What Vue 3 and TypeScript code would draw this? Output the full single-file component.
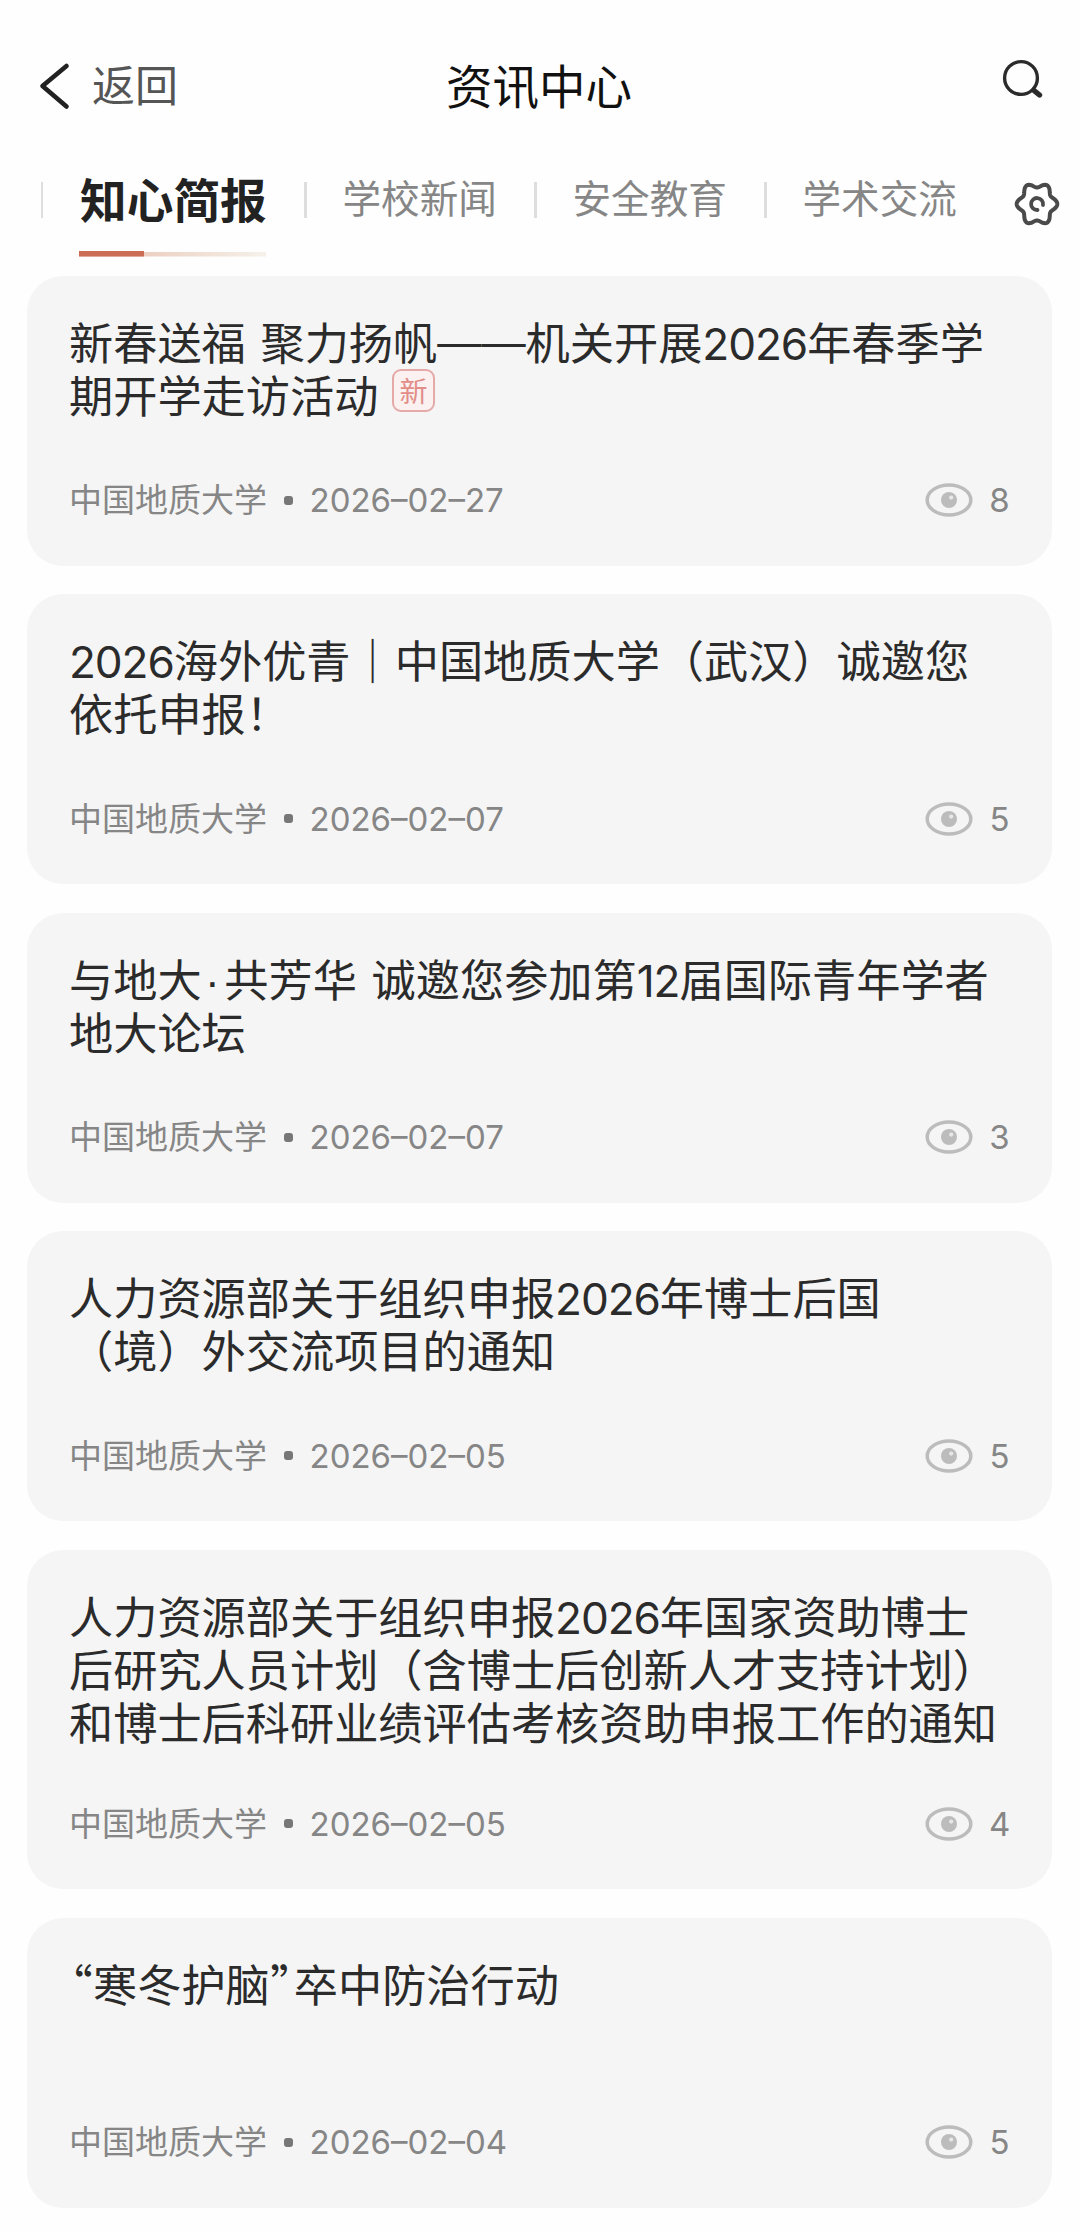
<script setup lang="ts">
interface Article {
  lines: string[]
  date: string
  views: number
  isNew?: boolean
}

interface Segment {
  text: string
  kind: string
}

const tabs: string[] = ['知心简报', '学校新闻', '安全教育', '学术交流']
const source = '中国地质大学'

const articles: Article[] = [
  { lines: ['新春送福 聚力扬帆——机关开展2026年春季学', '期开学走访活动'], date: '2026–02–27', views: 8, isNew: true },
  { lines: ['2026海外优青｜中国地质大学（武汉）诚邀您', '依托申报！'], date: '2026–02–07', views: 5 },
  { lines: ['与地大·共芳华 诚邀您参加第12届国际青年学者', '地大论坛'], date: '2026–02–07', views: 3 },
  { lines: ['人力资源部关于组织申报2026年博士后国', '（境）外交流项目的通知'], date: '2026–02–05', views: 5 },
  {
    lines: ['人力资源部关于组织申报2026年国家资助博士', '后研究人员计划（含博士后创新人才支持计划）', '和博士后科研业绩评估考核资助申报工作的通知'],
    date: '2026–02–05',
    views: 4,
  },
  { lines: ['“寒冬护脑”卒中防治行动'], date: '2026–02–04', views: 5 },
]

function kindOf(t: string): string {
  if (/^[0-9]/.test(t)) return 'num'
  if (t === ' ') return 'gap'
  if (t === '·') return 'mid'
  if (t === '“' || t === '”') return 'quote'
  if (t.startsWith('—')) return 'dash'
  return 'han'
}

// Splits a title line so that digits and punctuation get their own spacing.
function segments(line: string): Segment[] {
  return line
    .split(/([0-9]+|[“”· ]|—+)/)
    .filter((t) => t.length > 0)
    .map((t) => ({ text: t, kind: kindOf(t) }))
}

// Six-lobed outline of the settings icon.
function gearPath(): string {
  const pts: string[] = []
  for (let i = 0; i < 120; i++) {
    const a = (i / 120) * Math.PI * 2
    const r = 17.9 + 2.4 * Math.cos(6 * a)
    pts.push(`${(24 + r * Math.cos(a)).toFixed(2)} ${(24 + r * 1.06 * Math.sin(a)).toFixed(2)}`)
  }
  return `M${pts.join('L')}Z`
}
const gear = gearPath()
</script>

<template>
  <div class="page">
    <header class="nav">
      <div class="back">
        <svg class="chevron" width="32" height="48" viewBox="0 0 32 48">
          <path d="M28.5 4L4.5 24L28.5 44.5" fill="none" stroke="#222" stroke-width="4.6" stroke-linecap="round" stroke-linejoin="round" />
        </svg>
        <span class="back-text">返回</span>
      </div>
      <h1 class="heading">资讯中心</h1>
      <div class="search">
        <svg width="44" height="44" viewBox="0 0 44 44">
          <circle cx="20" cy="20" r="16.4" fill="none" stroke="#2b2b2b" stroke-width="3.4" />
          <path d="M33 32.5L38.5 37" stroke="#2b2b2b" stroke-width="5.4" stroke-linecap="round" />
        </svg>
      </div>
    </header>

    <nav class="tabs">
      <div v-for="(tab, i) in tabs" :key="tab" class="tab" :class="{ active: i === 0 }">
        <span class="label">{{ tab }}</span>
      </div>
      <svg class="gear" width="48" height="48" viewBox="0 0 48 48">
        <path :d="gear" fill="none" stroke="#4a4a4a" stroke-width="4" stroke-linejoin="round" />
        <path d="M24.5 30A6 6 0 1 1 30 25" fill="none" stroke="#4a4a4a" stroke-width="3.8" stroke-linecap="round" />
      </svg>
    </nav>

    <main class="list">
      <article v-for="(item, n) in articles" :key="n" class="card">
        <div class="title">
          <div v-for="(line, l) in item.lines" :key="l" class="line">
            <div class="text"><span v-for="(s, k) in segments(line)" :key="k" :class="s.kind">{{ s.text }}</span></div>
            <span v-if="item.isNew && l === item.lines.length - 1" class="badge">新</span>
          </div>
        </div>
        <div class="meta">
          <span class="source">{{ source }}</span>
          <i class="dot"></i>
          <span class="date">{{ item.date }}</span>
          <svg class="eye" width="48" height="36" viewBox="0 0 48 36">
            <ellipse cx="24" cy="18" rx="21.8" ry="15" fill="none" stroke="#bcbcbc" stroke-width="3.5" />
            <circle cx="24" cy="18" r="8" fill="#bcbcbc" />
            <circle cx="26.2" cy="15.6" r="2.1" fill="#e8e8e8" />
          </svg>
          <span class="views">{{ item.views }}</span>
        </div>
      </article>
    </main>
  </div>
</template>

<style>
body {
  margin: 0;
  background: #fefefe;
}
</style>

<style scoped>
.page {
  width: 1080px;
  height: 2231px;
  overflow: hidden;
  background: #fefefe;
  font-family: 'Noto Sans CJK SC', sans-serif;
}
.nav {
  display: grid;
  grid-template-columns: 1fr auto 1fr;
  align-items: center;
  height: 172px;
  padding: 0 40px 0 38px;
  box-sizing: border-box;
}
.back {
  display: flex;
  align-items: center;
  gap: 22px;
  font-size: 43px;
  line-height: 60px;
  color: #555;
}
.back-text {
  margin-bottom: 7px;
}
.heading {
  margin: 0 0 5px;
  font-size: 46.5px;
  line-height: 64px;
  font-weight: 400;
  color: #111;
}
.search {
  display: flex;
  justify-content: flex-end;
  margin-right: -4.5px;
  padding-bottom: 12px;
}
.tabs {
  display: flex;
  height: 104px;
  padding-left: 40.5px;
}
.tab {
  display: flex;
  align-items: flex-start;
  width: 230px;
}
.tab::before {
  content: '';
  width: 2.5px;
  height: 36px;
  margin-top: 10px;
  background: #dedede;
}
.label {
  margin-left: 36px;
  font-size: 38.6px;
  line-height: 48px;
  white-space: nowrap;
  color: #868686;
}
.tab.active {
  width: 263.5px;
}
.active .label {
  height: 85px;
  width: 187px;
  font-size: 46.7px;
  line-height: 52px;
  text-indent: 1px;
  font-weight: 700;
  color: #222;
  background:
    linear-gradient(#cb6c54, #cb6c54) 0 79px / 65px 5.5px no-repeat,
    linear-gradient(90deg, #ecd0c2 35%, #f5f1ea) 0 79.5px / 187px 4.5px no-repeat;
}
.gear {
  margin: 8px 0 0 19px;
}
.list {
  display: flex;
  flex-direction: column;
  gap: 28.5px;
  padding: 0 28px 0 27px;
}
.card {
  padding: 43px 42px 39.5px;
  border-radius: 36px;
  background: #f5f5f5;
}
.title {
  min-height: 109.1px;
  font-size: 44.2px;
  color: #2b2b2b;
}
.line {
  display: flex;
  align-items: center;
  height: 52.8px;
}
.text {
  height: 52.8px;
  line-height: 52.8px;
  white-space: pre;
  font-family: 'Liberation Sans', 'Noto Sans CJK SC', sans-serif;
}
.num {
  font-family: Inter, sans-serif;
  line-height: 1;
  letter-spacing: -1.1px;
}
.gap {
  letter-spacing: 2.4px;
}
.mid {
  padding: 0 4.5px 0 3.5px;
}
.quote {
  display: inline-block;
  width: 24px;
  height: 40px;
  line-height: 40px;
  text-align: center;
  font-family: 'Noto Sans CJK SC', sans-serif;
  font-feature-settings: 'palt';
}
.dash {
  line-height: 1;
  vertical-align: 3.5px;
}
.badge {
  width: 38.5px;
  height: 38.5px;
  margin: -15px 0 0 14px;
  border: 2px solid #e5aaa8;
  border-radius: 9px;
  background: #faf1f0;
  font-size: 28px;
  line-height: 38px;
  text-align: center;
  color: #e28d88;
}
.meta {
  display: flex;
  align-items: center;
  height: 52px;
  margin-top: 46.4px;
  font-family: Inter, 'Noto Sans CJK SC', sans-serif;
  font-size: 33px;
  line-height: 52px;
  color: #868686;
}
.dot {
  width: 9px;
  height: 9px;
  margin: 0 16.5px 0 17px;
  border-radius: 3px;
  background: #777;
}
.date {
  letter-spacing: 0;
}
.eye {
  margin-left: auto;
}
.views {
  width: 21px;
  margin-left: 16px;
  text-align: center;
}
</style>
